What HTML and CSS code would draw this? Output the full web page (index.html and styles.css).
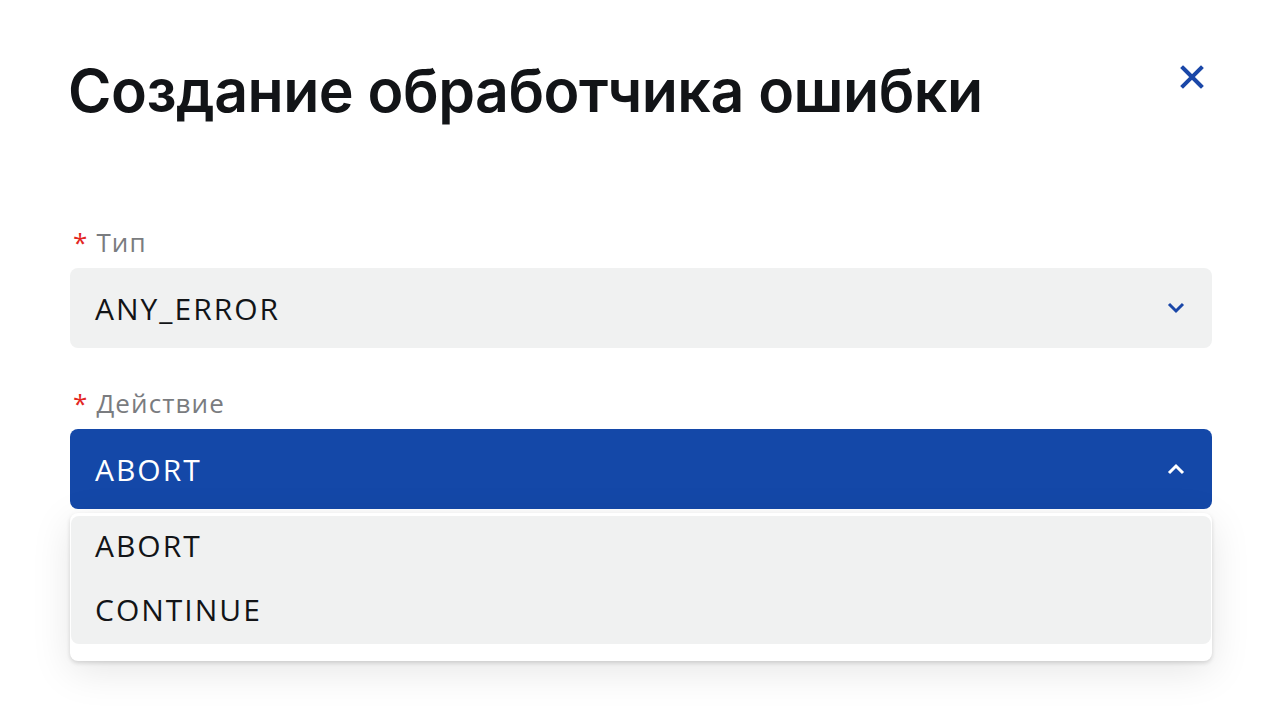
FILE: index.html
```html
<!DOCTYPE html>
<html lang="ru">
<head>
<meta charset="utf-8">
<title>Создание обработчика ошибки</title>
<link rel="stylesheet" href="styles.css">
</head>
<body>
<div class="modal">
  <div class="header">
    <h1 class="title">Создание обработчика ошибки</h1>
    <button class="close" aria-label="Закрыть">
      <svg width="24" height="24" viewBox="0 0 24 24"><path d="M3 3 L21 21 M21 3 L3 21" stroke="#1a47a8" stroke-width="4" stroke-linecap="square" fill="none"/></svg>
    </button>
  </div>
  <div class="form">
    <div class="field">
      <label class="label"><span class="req">*</span>Тип</label>
      <div class="select">
        <span class="value">ANY_ERROR</span>
        <svg class="chev" width="18" height="12" viewBox="0 0 18 12"><path d="M2 2 L9 9 L16 2" stroke="#1a47a8" stroke-width="3" fill="none"/></svg>
      </div>
    </div>
    <div class="field">
      <label class="label"><span class="req">*</span>Действие</label>
      <div class="select open">
        <span class="value">ABORT</span>
        <svg class="chev" width="18" height="12" viewBox="0 0 18 12"><path d="M2 10 L9 3 L16 10" stroke="#ffffff" stroke-width="3" fill="none"/></svg>
      </div>
      <div class="dropdown">
        <ul class="options">
          <li class="option">ABORT</li>
          <li class="option">CONTINUE</li>
        </ul>
      </div>
    </div>
  </div>
</div>
</body>
</html>
```
FILE: styles.css
```css
* { box-sizing: border-box; }
html, body { margin: 0; padding: 0; background: #ffffff; }
body { font-family: "Open Sans", "Noto Sans", sans-serif; color: #121417; }
.modal { width: 1276px; height: 728px; padding: 51px 64px 0 68px; }
.header { display: flex; justify-content: space-between; align-items: flex-start; }
.title {
  margin: 0;
  font-family: "Inter", "Noto Sans", sans-serif;
  font-weight: 600;
  font-size: 59px;
  line-height: 80px;
  color: #121417;
  letter-spacing: -0.5px;
}
.close {
  border: 0; background: none; padding: 0; margin: 14px 8px 0 0;
  width: 24px; height: 24px; cursor: pointer; display: flex;
}
.form { margin-top: 93px; margin-left: 2px; display: flex; flex-direction: column; gap: 37px; }
.field { display: flex; flex-direction: column; }
.label {
  font-size: 26px; line-height: 36px; color: #7a7c80; letter-spacing: 1.1px;
  margin: 0 0 8px 3px;
}
.req { color: #e3261f; margin-right: 8px; }
.select {
  height: 80px; border-radius: 8px; background: #f0f1f1;
  display: flex; align-items: center; justify-content: space-between;
  padding: 0 27px 0 25px;
}
.value { font-size: 30px; font-weight: 500; letter-spacing: 2px; color: #121417; }
.select.open { background: #1448a8; }
.select.open .value { color: #ffffff; }
.dropdown {
  margin-top: 4px; background: #ffffff; border-radius: 8px;
  padding: 3px 1px 17px 1px;
  box-shadow: 0 2px 4px rgba(0,0,0,0.14), 0 10px 40px rgba(0,0,0,0.10);
}
.options { list-style: none; margin: 0; padding: 0; background: #f0f1f1; border-radius: 8px; }
.option {
  height: 64px; display: flex; align-items: center; padding: 0 0 5px 24px;
  font-size: 30px; font-weight: 500; letter-spacing: 2px; color: #121417;
}
```
